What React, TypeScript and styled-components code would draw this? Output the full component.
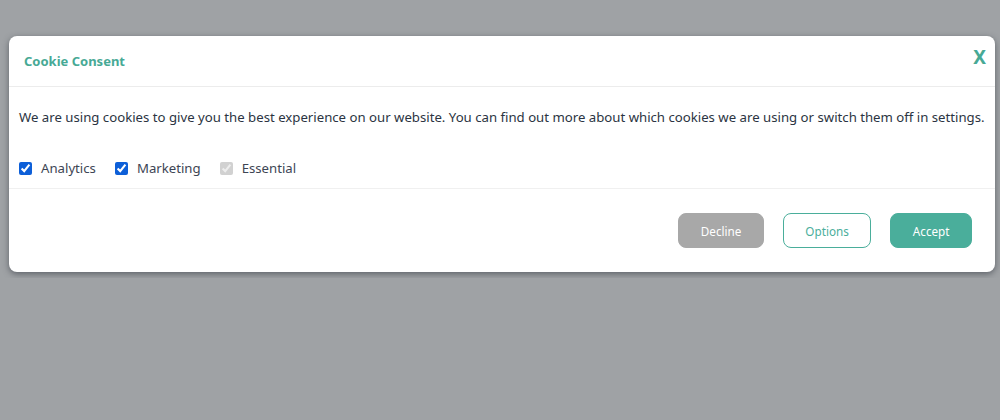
import React from 'react';
import styled, {createGlobalStyle} from "styled-components";

const GlobalStyle = createGlobalStyle`
  html, body {
    margin: 0;
    padding: 0;
    background: #9fa2a5;
    font-family: "Noto Sans", "Open Sans", sans-serif;
  }
`

type Choice = {
    id: string
    label: string
    checked: boolean
    disabled?: boolean
}

const choices: Choice[] = [
    {id: 'analytics', label: 'Analytics', checked: true},
    {id: 'marketing', label: 'Marketing', checked: true},
    {id: 'essential', label: 'Essential', checked: true, disabled: true},
]

export default function App() {
    return (
        <>
            <GlobalStyle/>
            <StyledOverlay>
                <StyledModal>
                    <StyledHeader>
                        <StyledTitle>Cookie Consent</StyledTitle>
                        <StyledClose>X</StyledClose>
                    </StyledHeader>
                    <StyledBody>
                        <StyledText>
                            We are using cookies to give you the best experience on our website. You can find out more about which cookies we are using or switch them off in settings.
                        </StyledText>
                        <StyledChoices>
                            {choices.map(c => (
                                <StyledChoice key={c.id}>
                                    <input type="checkbox" defaultChecked={c.checked} disabled={c.disabled}/>
                                    {c.label}
                                </StyledChoice>
                            ))}
                        </StyledChoices>
                    </StyledBody>
                    <StyledFooter>
                        <StyledButton $variant="decline">Decline</StyledButton>
                        <StyledButton $variant="options">Options</StyledButton>
                        <StyledButton $variant="accept">Accept</StyledButton>
                    </StyledFooter>
                </StyledModal>
            </StyledOverlay>
        </>
    );
}

const StyledOverlay = styled.div`
  padding: 36px 5px 6px 9px;
`
const StyledModal = styled.div`
  background: #fff;
  border-radius: 8px;
  box-shadow: 0 2px 6px rgba(40, 45, 55, 0.55);
  overflow: hidden;
`
const StyledHeader = styled.div`
  height: 50px;
  display: flex;
  align-items: center;
  justify-content: space-between;
  padding: 0 9px 0 15px;
  border-bottom: 1px solid #ececec;
`
const StyledTitle = styled.h2`
  margin: 0;
  font-size: 13px;
  font-weight: 700;
  color: #47a995;
`
const StyledClose = styled.button`
  border: none;
  background: none;
  padding: 0;
  margin-top: -8px;
  font-family: "Noto Sans", sans-serif;
  font-size: 19px;
  font-weight: 700;
  color: #47a995;
  cursor: pointer;
`
const StyledBody = styled.div`
  padding: 19px 10px 0;
  border-bottom: 1px solid #f0f0f0;
`
const StyledText = styled.p`
  margin: 0;
  font-size: 13.2px;
  line-height: 22px;
  color: #2b3442;
  white-space: nowrap;
`
const StyledChoices = styled.div`
  display: flex;
  gap: 19px;
  padding: 31px 0 11px;
`
const StyledChoice = styled.label`
  display: flex;
  align-items: center;
  gap: 9px;
  font-size: 13.2px;
  color: #3d4554;

  input {
    margin: 0;
    width: 13px;
    height: 13px;
    accent-color: #0d5fd8;
  }
`
const StyledFooter = styled.div`
  display: flex;
  justify-content: flex-end;
  gap: 19px;
  padding: 24px 23px 24px;
`
const StyledButton = styled.button<{ $variant: 'decline' | 'options' | 'accept' }>`
  height: 35px;
  padding: 0 21.5px;
  border-radius: 8px;
  font-family: "Noto Sans", sans-serif;
  font-size: 11.7px;
  cursor: pointer;
  border: 1px solid ${p => p.$variant === 'decline' ? '#a8a8a8' : '#4aae9b'};
  background: ${p => p.$variant === 'decline' ? '#a8a8a8' : p.$variant === 'accept' ? '#4aae9b' : '#fff'};
  color: ${p => p.$variant === 'options' ? '#4aae9b' : '#fff'};
`
